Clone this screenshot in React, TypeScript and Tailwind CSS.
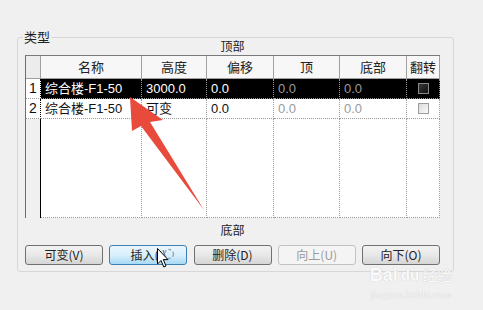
import React from 'react';

type Row = {
  no: string;
  name: string;
  height: string;
  offset: string;
  top: string;
  bottom: string;
  selected?: boolean;
};

const rows: Row[] = [
  { no: '1', name: '综合楼-F1-50', height: '3000.0', offset: '0.0', top: '0.0', bottom: '0.0', selected: true },
  { no: '2', name: '综合楼-F1-50', height: '可变', offset: '0.0', top: '0.0', bottom: '0.0' },
];

const headers = [
  { label: '名称', w: 'w-[101px]' },
  { label: '高度', w: 'w-[65px]' },
  { label: '偏移', w: 'w-[67px]' },
  { label: '顶', w: 'w-[66px]' },
  { label: '底部', w: 'w-[67px]' },
  { label: '翻转', w: 'w-[33px]' },
];

const font = "font-['Liberation_Sans','Noto_Sans_CJK_SC',sans-serif]";
const cell = 'h-full flex items-center pl-[4px] border-r border-b border-dotted border-[#9a9a9a] whitespace-nowrap';

function Checkbox({ dark }: { dark?: boolean }) {
  return (
    <span
      className={
        dark
          ? 'block w-[11px] h-[11px] border border-[#8a8a8a] bg-gradient-to-br from-[#3a3a3a] to-[#111]'
          : 'block w-[11px] h-[11px] border border-[#9c9c9c] bg-gradient-to-br from-[#dcdcdc] to-[#fafafa]'
      }
    />
  );
}

function DataRow({ r }: { r: Row }) {
  const bg = r.selected ? 'bg-black' : 'bg-white';
  const txt = r.selected ? 'text-white' : 'text-[#111]';
  return (
    <div className="flex h-[20px]">
      <div className="w-[15px] h-full flex items-center justify-center bg-white border-r border-r-black border-b border-dotted border-b-[#9a9a9a] text-[14px] text-[#111]">
        {r.no}
      </div>
      <div className={`w-[101px] ${cell} ${bg} ${txt}`}>{r.name}</div>
      <div className={`w-[65px] ${cell} ${bg} ${txt}`}>{r.height}</div>
      <div className={`w-[67px] ${cell} ${bg} ${txt}`}>{r.offset}</div>
      <div className={`w-[66px] ${cell} ${bg} text-[#9a9a9a]`}>{r.top}</div>
      <div className={`w-[67px] ${cell} ${bg} text-[#9a9a9a]`}>{r.bottom}</div>
      <div className={`w-[33px] h-full flex items-center justify-center border-r border-b border-dotted border-[#9a9a9a] ${bg}`}>
        <Checkbox dark={r.selected} />
      </div>
    </div>
  );
}

function Btn({ label, state }: { label: string; state?: 'hover' | 'disabled' }) {
  let cls =
    'border-[#707070] bg-gradient-to-b from-[#f3f3f3] via-[#e8e8e8] to-[#d5d5d5] text-[#222]';
  if (state === 'hover')
    cls = 'border-[#3c7fb1] bg-gradient-to-b from-[#eaf6fd] via-[#d9f0fc] to-[#a7d9f5] text-[#222]';
  if (state === 'disabled') cls = 'border-[#c2c2c2] bg-[#f4f4f4] text-[#9a9a9a]';
  return (
    <div
      className={`w-[78px] h-[20px] flex items-center justify-center rounded-[3px] border text-[12px] font-['Noto_Sans_CJK_SC',sans-serif] ${cls}`}
    >
      {label}
    </div>
  );
}

export default function App() {
  return (
    <div className={`relative w-[483px] h-[310px] overflow-hidden bg-[#f0f0f0] pt-[37px] pl-[17px] ${font}`}>
      {/* 类型 group box */}
      <div className="relative w-[437px] h-[235px] border border-[#d7d7d7] rounded-[3px] pl-[7px]">
        <span className="absolute -top-[10px] left-[5px] px-[1px] bg-[#f0f0f0] text-[13px] leading-[18px] text-[#222] font-['Noto_Sans_CJK_SC',sans-serif]">
          类型
        </span>

        <div className="w-[415px] h-[17px] text-center text-[12px] leading-[15px] text-[#222] font-['Noto_Sans_CJK_SC',sans-serif]">
          顶部
        </div>

        {/* table */}
        <div className="w-[415px] h-[163px] flex flex-col border-l border-t border-l-[#6e6e6e] border-t-[#7a7a7a] text-[13px]">
          <div className="flex h-[23px] bg-[#f7f7f7] border-b border-[#a0a0a0]">
            <div className="w-[15px] h-full bg-[#ececec] border-r border-[#a0a0a0]" />
            {headers.map((h) => (
              <div
                key={h.label}
                className={`${h.w} h-full flex items-center justify-center border-r border-[#a0a0a0] text-[13px] text-[#222] font-['Noto_Sans_CJK_SC',sans-serif]`}
              >
                {h.label}
              </div>
            ))}
          </div>
          {rows.map((r) => (
            <DataRow key={r.no} r={r} />
          ))}
          <div className="flex flex-1">
            <div className="w-[15px] h-full bg-[#f0f0f0] border-r border-r-black" />
            <div className={`w-[101px] ${cell} bg-white`} />
            <div className={`w-[65px] ${cell} bg-white`} />
            <div className={`w-[67px] ${cell} bg-white`} />
            <div className={`w-[66px] ${cell} bg-white`} />
            <div className={`w-[67px] ${cell} bg-white`} />
            <div className={`w-[33px] ${cell} bg-white`} />
          </div>
        </div>

        <div className="w-[415px] h-[24px] text-center text-[12px] leading-[24px] text-[#222] font-['Noto_Sans_CJK_SC',sans-serif]">
          底部
        </div>

        <div className="w-[415px] mt-[3px] flex justify-between">
          <Btn label="可变(V)" />
          <Btn label="插入(I)" state="hover" />
          <Btn label="删除(D)" />
          <Btn label="向上(U)" state="disabled" />
          <Btn label="向下(O)" />
        </div>
      </div>

      {/* red annotation arrow */}
      <svg className="absolute left-0 top-0 pointer-events-none" width="483" height="310">
        <polygon
          points="130,97 163,120 150,122 204,210 141,126 132,131"
          fill="#e84a3c"
        />
      </svg>

      {/* mouse cursor */}
      <svg className="absolute left-[157px] top-[248px] pointer-events-none" width="20" height="22" viewBox="0 0 20 22">
        <circle cx="12" cy="6" r="4.5" fill="none" stroke="#9ab" strokeWidth="1.5" strokeDasharray="3 2" />
        <path d="M0.5 0.5 L0.5 16 L4 12.5 L6.8 19 L9 18 L6.3 11.6 L11 11.6 Z" fill="#fff" stroke="#000" strokeWidth="1" />
      </svg>

      {/* watermark */}
      <div className="absolute left-[367px] top-[265px] w-[88px] flex flex-col items-center pointer-events-none whitespace-nowrap text-[#fafafa] [text-shadow:0_0_1px_#cfcfcf,0_0_1px_#cfcfcf]">
        <div className="h-[19px] flex items-center gap-[3px] leading-[16px]">
          <span className="text-[18px] font-bold font-['Liberation_Sans',sans-serif]">Bai</span>
          <span className="text-[15px] font-bold font-['Liberation_Sans',sans-serif]">du</span>
          <span className="text-[15px] leading-[16px] font-['Noto_Sans_CJK_SC',sans-serif]">经验</span>
        </div>
        <span className="h-[11px] mt-[5px] text-[10px] leading-[11px] tracking-[0.4px] font-['Liberation_Serif',serif]">jingyan.baidu.com</span>
      </div>
    </div>
  );
}
